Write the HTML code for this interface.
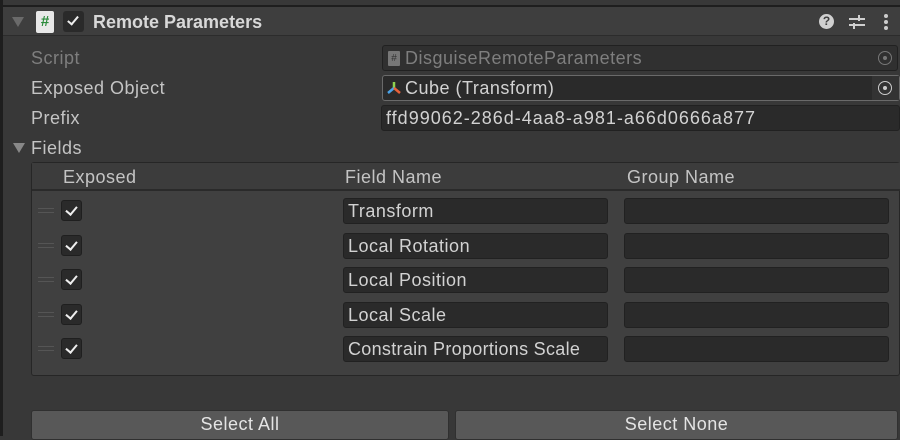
<!DOCTYPE html>
<html><head><style>
*{margin:0;padding:0;box-sizing:border-box}
body{width:900px;height:436px;background:#383838;font-family:"Liberation Sans",sans-serif;color:#d2d2d2;position:relative;overflow:hidden;font-size:18px;letter-spacing:.5px}
.a{position:absolute}
.lbl{position:absolute;left:31px;font-size:18px;color:#c4c4c4}
.fld{position:absolute;background:#2a2a2a;border-radius:3px;border:1px solid #212121;font-size:18px;padding-left:4px;line-height:24px;color:#d2d2d2}
.cb{position:absolute;left:61px;width:21px;height:21px;background:#2a2a2a;border-radius:3px;border:1px solid #1f1f1f}
.cb:after{content:"";position:absolute;left:6px;top:3px;width:5px;height:9px;border:solid #eee;border-width:0 2px 2px 0;transform:rotate(40deg)}
.drag{position:absolute;left:38px;width:16px;height:5px;border-top:1px solid #555;border-bottom:1px solid #555}
.btn{position:absolute;top:410px;height:30px;background:#585858;border-radius:3px;border:1px solid #303030;text-align:center;line-height:27px;color:#e4e4e4;font-size:18px}
</style></head><body>
<div class="a" style="left:0;top:0;width:3px;height:436px;background:#1e1e1e"></div>
<div class="a" style="left:0;top:5px;width:900px;height:2px;background:#1e1e1e"></div>
<div class="a" style="left:3px;top:7px;width:897px;height:29px;background:#3e3e3e;border-bottom:1px solid #2c2c2c"></div>
<div class="a" style="left:12px;top:17px;width:0;height:0;border-left:6px solid transparent;border-right:6px solid transparent;border-top:10px solid #6a6a6a"></div>
<div class="a" style="left:36px;top:11px;width:18px;height:22px;background:#e8e8e8;border-radius:2px;color:#2a8a3a;font-size:15px;font-weight:bold;text-align:center;line-height:22px;letter-spacing:0">#</div>
<div class="a" style="left:63px;top:11px;width:21px;height:21px;background:#2a2a2a;border-radius:3px"></div>
<div class="a" style="left:70px;top:14px;width:6px;height:11px;border:solid #eee;border-width:0 2px 2px 0;transform:rotate(40deg)"></div>
<div class="a" style="left:93px;top:12px;font-size:18px;font-weight:bold;color:#d8d8d8;letter-spacing:0">Remote Parameters</div>
<div class="a" style="left:819px;top:14px;width:15px;height:15px;border-radius:50%;background:#d0d0d0;color:#3e3e3e;font-size:12px;font-weight:bold;text-align:center;line-height:15px;letter-spacing:0">?</div>
<svg class="a" style="left:848px;top:13px" width="18" height="18"><path d="M1 6H17M1 12H17M11 2V8M6 10V16" stroke="#cfcfcf" stroke-width="2"/></svg>
<div class="a" style="left:884px;top:14px;width:4px;height:4px;border-radius:50%;background:#ccc;box-shadow:0 6px 0 #ccc,0 12px 0 #ccc"></div>

<div class="lbl" style="top:48px;color:#7e7e7e">Script</div>
<div class="fld" style="left:382px;top:45px;width:516px;height:26px;background:#303030;color:#7e7e7e;padding-left:22px">DisguiseRemoteParameters</div>
<div class="a" style="left:388px;top:51px;width:12px;height:15px;background:#777;border-radius:1px;font-size:10px;color:#333;text-align:center;line-height:15px;letter-spacing:0">#</div>
<div class="a" style="left:878px;top:51px;width:14px;height:14px;border:1.5px solid #777;border-radius:50%"></div>
<div class="a" style="left:883px;top:56px;width:4px;height:4px;background:#777;border-radius:50%"></div>

<div class="lbl" style="top:78px">Exposed Object</div>
<div class="fld" style="left:382px;top:75px;width:518px;height:26px;border:1px solid #6a6a6a;padding-left:22px">Cube (Transform)</div>
<svg class="a" style="left:386px;top:80px" width="16" height="16"><path d="M8 8V2" stroke="#8fd14f" stroke-width="2.5"/><path d="M8 8L2 13" stroke="#4aa3e8" stroke-width="2.5"/><path d="M8 8L14 13" stroke="#e8613a" stroke-width="2.5"/></svg>
<div class="a" style="left:872px;top:76px;width:27px;height:24px;background:#333"></div>
<div class="a" style="left:878px;top:81px;width:14px;height:14px;border:1.5px solid #ccc;border-radius:50%"></div>
<div class="a" style="left:883px;top:86px;width:4px;height:4px;background:#ccc;border-radius:50%"></div>

<div class="lbl" style="top:108px">Prefix</div>
<div class="fld" style="left:381px;top:105px;width:519px;height:26px;letter-spacing:1px">ffd99062-286d-4aa8-a981-a66d0666a877</div>

<div class="a" style="left:13px;top:143px;width:0;height:0;border-left:6px solid transparent;border-right:6px solid transparent;border-top:10px solid #888"></div>
<div class="lbl" style="top:138px">Fields</div>

<div class="a" style="left:31px;top:162px;width:869px;height:214px;background:#404040;border:1px solid #262626;border-radius:3px"></div>
<div class="a" style="left:32px;top:163px;width:868px;height:28px;background:#3c3c3c;border-bottom:2px solid #2a2a2a"></div>
<div class="a" style="left:63px;top:167px;color:#c4c4c4">Exposed</div>
<div class="a" style="left:345px;top:167px;color:#c4c4c4">Field Name</div>
<div class="a" style="left:627px;top:167px;color:#c4c4c4">Group Name</div>

<div class="drag" style="top:208px"></div><div class="cb" style="top:200px"></div>
<div class="fld" style="left:343px;top:198px;width:265px;height:26px">Transform</div>
<div class="fld" style="left:624px;top:198px;width:265px;height:26px"></div>
<div class="drag" style="top:243px"></div><div class="cb" style="top:235px"></div>
<div class="fld" style="left:343px;top:233px;width:265px;height:26px">Local Rotation</div>
<div class="fld" style="left:624px;top:233px;width:265px;height:26px"></div>
<div class="drag" style="top:277px"></div><div class="cb" style="top:269px"></div>
<div class="fld" style="left:343px;top:267px;width:265px;height:26px">Local Position</div>
<div class="fld" style="left:624px;top:267px;width:265px;height:26px"></div>
<div class="drag" style="top:312px"></div><div class="cb" style="top:304px"></div>
<div class="fld" style="left:343px;top:302px;width:265px;height:26px">Local Scale</div>
<div class="fld" style="left:624px;top:302px;width:265px;height:26px"></div>
<div class="drag" style="top:346px"></div><div class="cb" style="top:338px"></div>
<div class="fld" style="left:343px;top:336px;width:265px;height:26px;letter-spacing:.3px">Constrain Proportions Scale</div>
<div class="fld" style="left:624px;top:336px;width:265px;height:26px"></div>

<div class="btn" style="left:31px;width:418px">Select All</div>
<div class="btn" style="left:455px;width:443px">Select None</div>
</body></html>
